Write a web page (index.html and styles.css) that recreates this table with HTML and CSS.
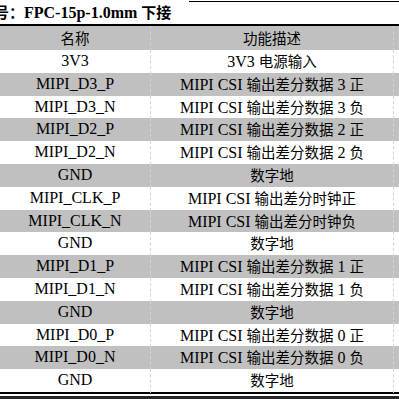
FILE: index.html
```html
<!DOCTYPE html>
<html lang="zh">
<head>
<meta charset="utf-8">
<link rel="stylesheet" href="styles.css">
</head>
<body>
<div class="page">
  <div class="title-row">
    <div class="title"><span class="zh">号：</span>FPC-15p-1.0mm <span class="zh">下接</span></div>
    <div class="title-rule"></div>
  </div>
  <div class="table">
    <div class="row head"><div class="c1"><span class="zh">名称</span></div><div class="c2"><span class="zh">功能描述</span></div><div class="c3"></div></div>
    <div class="row"><div class="c1">3V3</div><div class="c2">3V3 <span class="zh">电源输入</span></div><div class="c3"></div></div>
    <div class="row alt"><div class="c1">MIPI_D3_P</div><div class="c2">MIPI CSI <span class="zh">输出差分数据</span> 3 <span class="zh">正</span></div><div class="c3"></div></div>
    <div class="row"><div class="c1">MIPI_D3_N</div><div class="c2">MIPI CSI <span class="zh">输出差分数据</span> 3 <span class="zh">负</span></div><div class="c3"></div></div>
    <div class="row alt"><div class="c1">MIPI_D2_P</div><div class="c2">MIPI CSI <span class="zh">输出差分数据</span> 2 <span class="zh">正</span></div><div class="c3"></div></div>
    <div class="row"><div class="c1">MIPI_D2_N</div><div class="c2">MIPI CSI <span class="zh">输出差分数据</span> 2 <span class="zh">负</span></div><div class="c3"></div></div>
    <div class="row alt"><div class="c1">GND</div><div class="c2"><span class="zh">数字地</span></div><div class="c3"></div></div>
    <div class="row"><div class="c1">MIPI_CLK_P</div><div class="c2">MIPI CSI <span class="zh">输出差分时钟正</span></div><div class="c3"></div></div>
    <div class="row alt"><div class="c1">MIPI_CLK_N</div><div class="c2">MIPI CSI <span class="zh">输出差分时钟负</span></div><div class="c3"></div></div>
    <div class="row"><div class="c1">GND</div><div class="c2"><span class="zh">数字地</span></div><div class="c3"></div></div>
    <div class="row alt"><div class="c1">MIPI_D1_P</div><div class="c2">MIPI CSI <span class="zh">输出差分数据</span> 1 <span class="zh">正</span></div><div class="c3"></div></div>
    <div class="row"><div class="c1">MIPI_D1_N</div><div class="c2">MIPI CSI <span class="zh">输出差分数据</span> 1 <span class="zh">负</span></div><div class="c3"></div></div>
    <div class="row alt"><div class="c1">GND</div><div class="c2"><span class="zh">数字地</span></div><div class="c3"></div></div>
    <div class="row"><div class="c1">MIPI_D0_P</div><div class="c2">MIPI CSI <span class="zh">输出差分数据</span> 0 <span class="zh">正</span></div><div class="c3"></div></div>
    <div class="row alt"><div class="c1">MIPI_D0_N</div><div class="c2">MIPI CSI <span class="zh">输出差分数据</span> 0 <span class="zh">负</span></div><div class="c3"></div></div>
    <div class="row"><div class="c1">GND</div><div class="c2"><span class="zh">数字地</span></div><div class="c3"></div></div>
  </div>
  <div class="foot-gap"></div>
  <div class="foot-bar"></div>
</div>
</body>
</html>
```
FILE: styles.css
```css
html, body {
  margin: 0;
  padding: 0;
  background: #fff;
  overflow: hidden;
}
.page {
  width: 399px;
  height: 399px;
  overflow: hidden;
  font-family: "Liberation Serif", "Noto Sans CJK SC", serif;
  font-size: 16px;
  color: #000;
}
.zh {
  font-family: "Noto Sans CJK SC", sans-serif;
  font-size: 14.5px;
}
.title-row {
  height: 24px;
  display: flex;
  align-items: flex-start;
}
.title {
  margin-left: -6px;
  height: 24px;
  line-height: 24px;
  font-weight: bold;
  white-space: nowrap;
  font-size: 16px;
}
.title .zh {
  font-size: 15px;
  font-weight: bold;
}
.title-rule {
  flex: 1;
  margin-left: 18px;
  margin-top: 1px;
  border-top: 1px solid #000;
}
.table {
  border-top: 2px solid #000;
  border-bottom: 2px solid #000;
}
.row {
  display: grid;
  grid-template-columns: 151px 243px 1fr;
  height: 22.8px;
  line-height: 22.8px;
  background: #fff;
}
.row.head {
  height: 24px;
  line-height: 24px;
  background: #c0c0c0;
}
.row.alt {
  background: #c0c0c0;
}
.c1, .c2 {
  text-align: center;
  white-space: nowrap;
  border-right: 1px dashed #d4d4d4;
}
.foot-gap {
  height: 2px;
}
.foot-bar {
  height: 10px;
  background: #262626;
}
```
